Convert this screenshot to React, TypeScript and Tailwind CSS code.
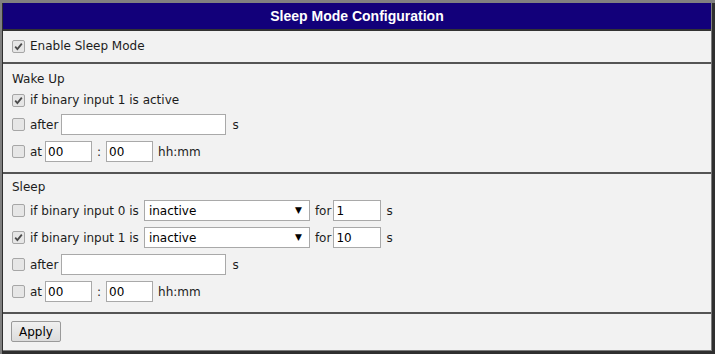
const font = { fontFamily: '"DejaVu Sans", Verdana, sans-serif' };

const Check = ({ checked = false }: { checked?: boolean }) => (
  <span className="w-[13px] h-[13px] shrink-0 rounded-[2px] border border-[#a6a6a6] bg-[#e6e6e6] flex items-center justify-center">
    {checked && (
      <svg width="9" height="9" viewBox="0 0 9 9">
        <path d="M1.2 4.6 L3.4 7 L7.8 1.6" fill="none" stroke="#4a4a4a" strokeWidth="1.8" />
      </svg>
    )}
  </span>
);

const Field = ({ w, value = "" }: { w: string; value?: string }) => (
  <span className={`${w} h-[21px] border border-[#a9a9a9] bg-white px-[2px] flex items-center text-[12px] text-black`}>
    {value}
  </span>
);

const Select = () => (
  <span className="w-[166px] h-[21px] border border-[#a9a9a9] bg-white pl-[4px] pr-[7px] flex items-center justify-between text-[12px] text-black">
    <span>inactive</span>
    <span className="text-[9px] text-black">▼</span>
  </span>
);

const Row = ({ checked, h = "h-[27px]", children }: { checked?: boolean; h?: string; children: React.ReactNode }) => (
  <div className={`${h} flex items-center gap-[5px]`}>
    <Check checked={checked} />
    {children}
  </div>
);

const TimeRow = () => (
  <Row>
    <span className="mr-[-2px]">at</span>
    <Field w="w-[47px]" value="00" />
    <span>:</span>
    <Field w="w-[47px]" value="00" />
    <span>hh:mm</span>
  </Row>
);

const AfterRow = () => (
  <Row>
    <span className="mr-[-2px]">after</span>
    <Field w="w-[165px]" />
    <span className="ml-[1px]">s</span>
  </Row>
);

const InputRow = ({ n, checked, v }: { n: number; checked?: boolean; v: string }) => (
  <Row checked={checked}>
    <span>if binary input {n} is</span>
    <Select />
    <span className="mr-[-3px]">for</span>
    <Field w="w-[48px]" value={v} />
    <span>s</span>
  </Row>
);

export default function App() {
  return (
    <div
      style={font}
      className="w-[715px] h-[354px] bg-[#2f2f2f] border-t-[3px] border-l-[2px] border-[#808080] pr-[3px] pb-[3px] text-[12px] text-[#1c1c1c]"
    >
      <div className="ml-[1px] h-full border-r border-b border-[#7d7d7d] bg-[#f2f2f2] flex flex-col">
        <div
          style={{ fontFamily: '"Liberation Sans", Arial, sans-serif' }}
          className="h-[26px] bg-[#12007a] flex items-center justify-center text-white font-bold text-[14px]"
        >
          Sleep Mode Configuration
        </div>
        <div className="h-[2px] bg-[#333333]" />

        <div className="h-[31px] pl-[9px] pt-[4px]">
          <Row checked h="h-[22px]">
            <span>Enable Sleep Mode</span>
          </Row>
        </div>
        <div className="h-[2px] bg-[#555555]" />

        <div className="h-[108px] pl-[9px] pt-[5px]">
          <div className="h-[20px] flex items-center">Wake Up</div>
          <Row checked h="h-[22px]">
            <span>if binary input 1 is active</span>
          </Row>
          <AfterRow />
          <TimeRow />
        </div>
        <div className="h-[2px] bg-[#555555]" />

        <div className="h-[138px] pl-[9px] pt-[3px]">
          <div className="h-[20px] flex items-center">Sleep</div>
          <InputRow n={0} v="1" />
          <InputRow n={1} checked v="10" />
          <AfterRow />
          <TimeRow />
        </div>
        <div className="h-[2px] bg-[#555555]" />

        <div className="flex-1 pl-[8px] pt-[7px]">
          <button className="w-[50px] h-[21px] border border-[#9a9a9a] rounded-[2px] bg-gradient-to-b from-[#f0f0f0] to-[#dcdcdc] text-[12px] text-black flex items-center justify-center">
            Apply
          </button>
        </div>
      </div>
    </div>
  );
}
